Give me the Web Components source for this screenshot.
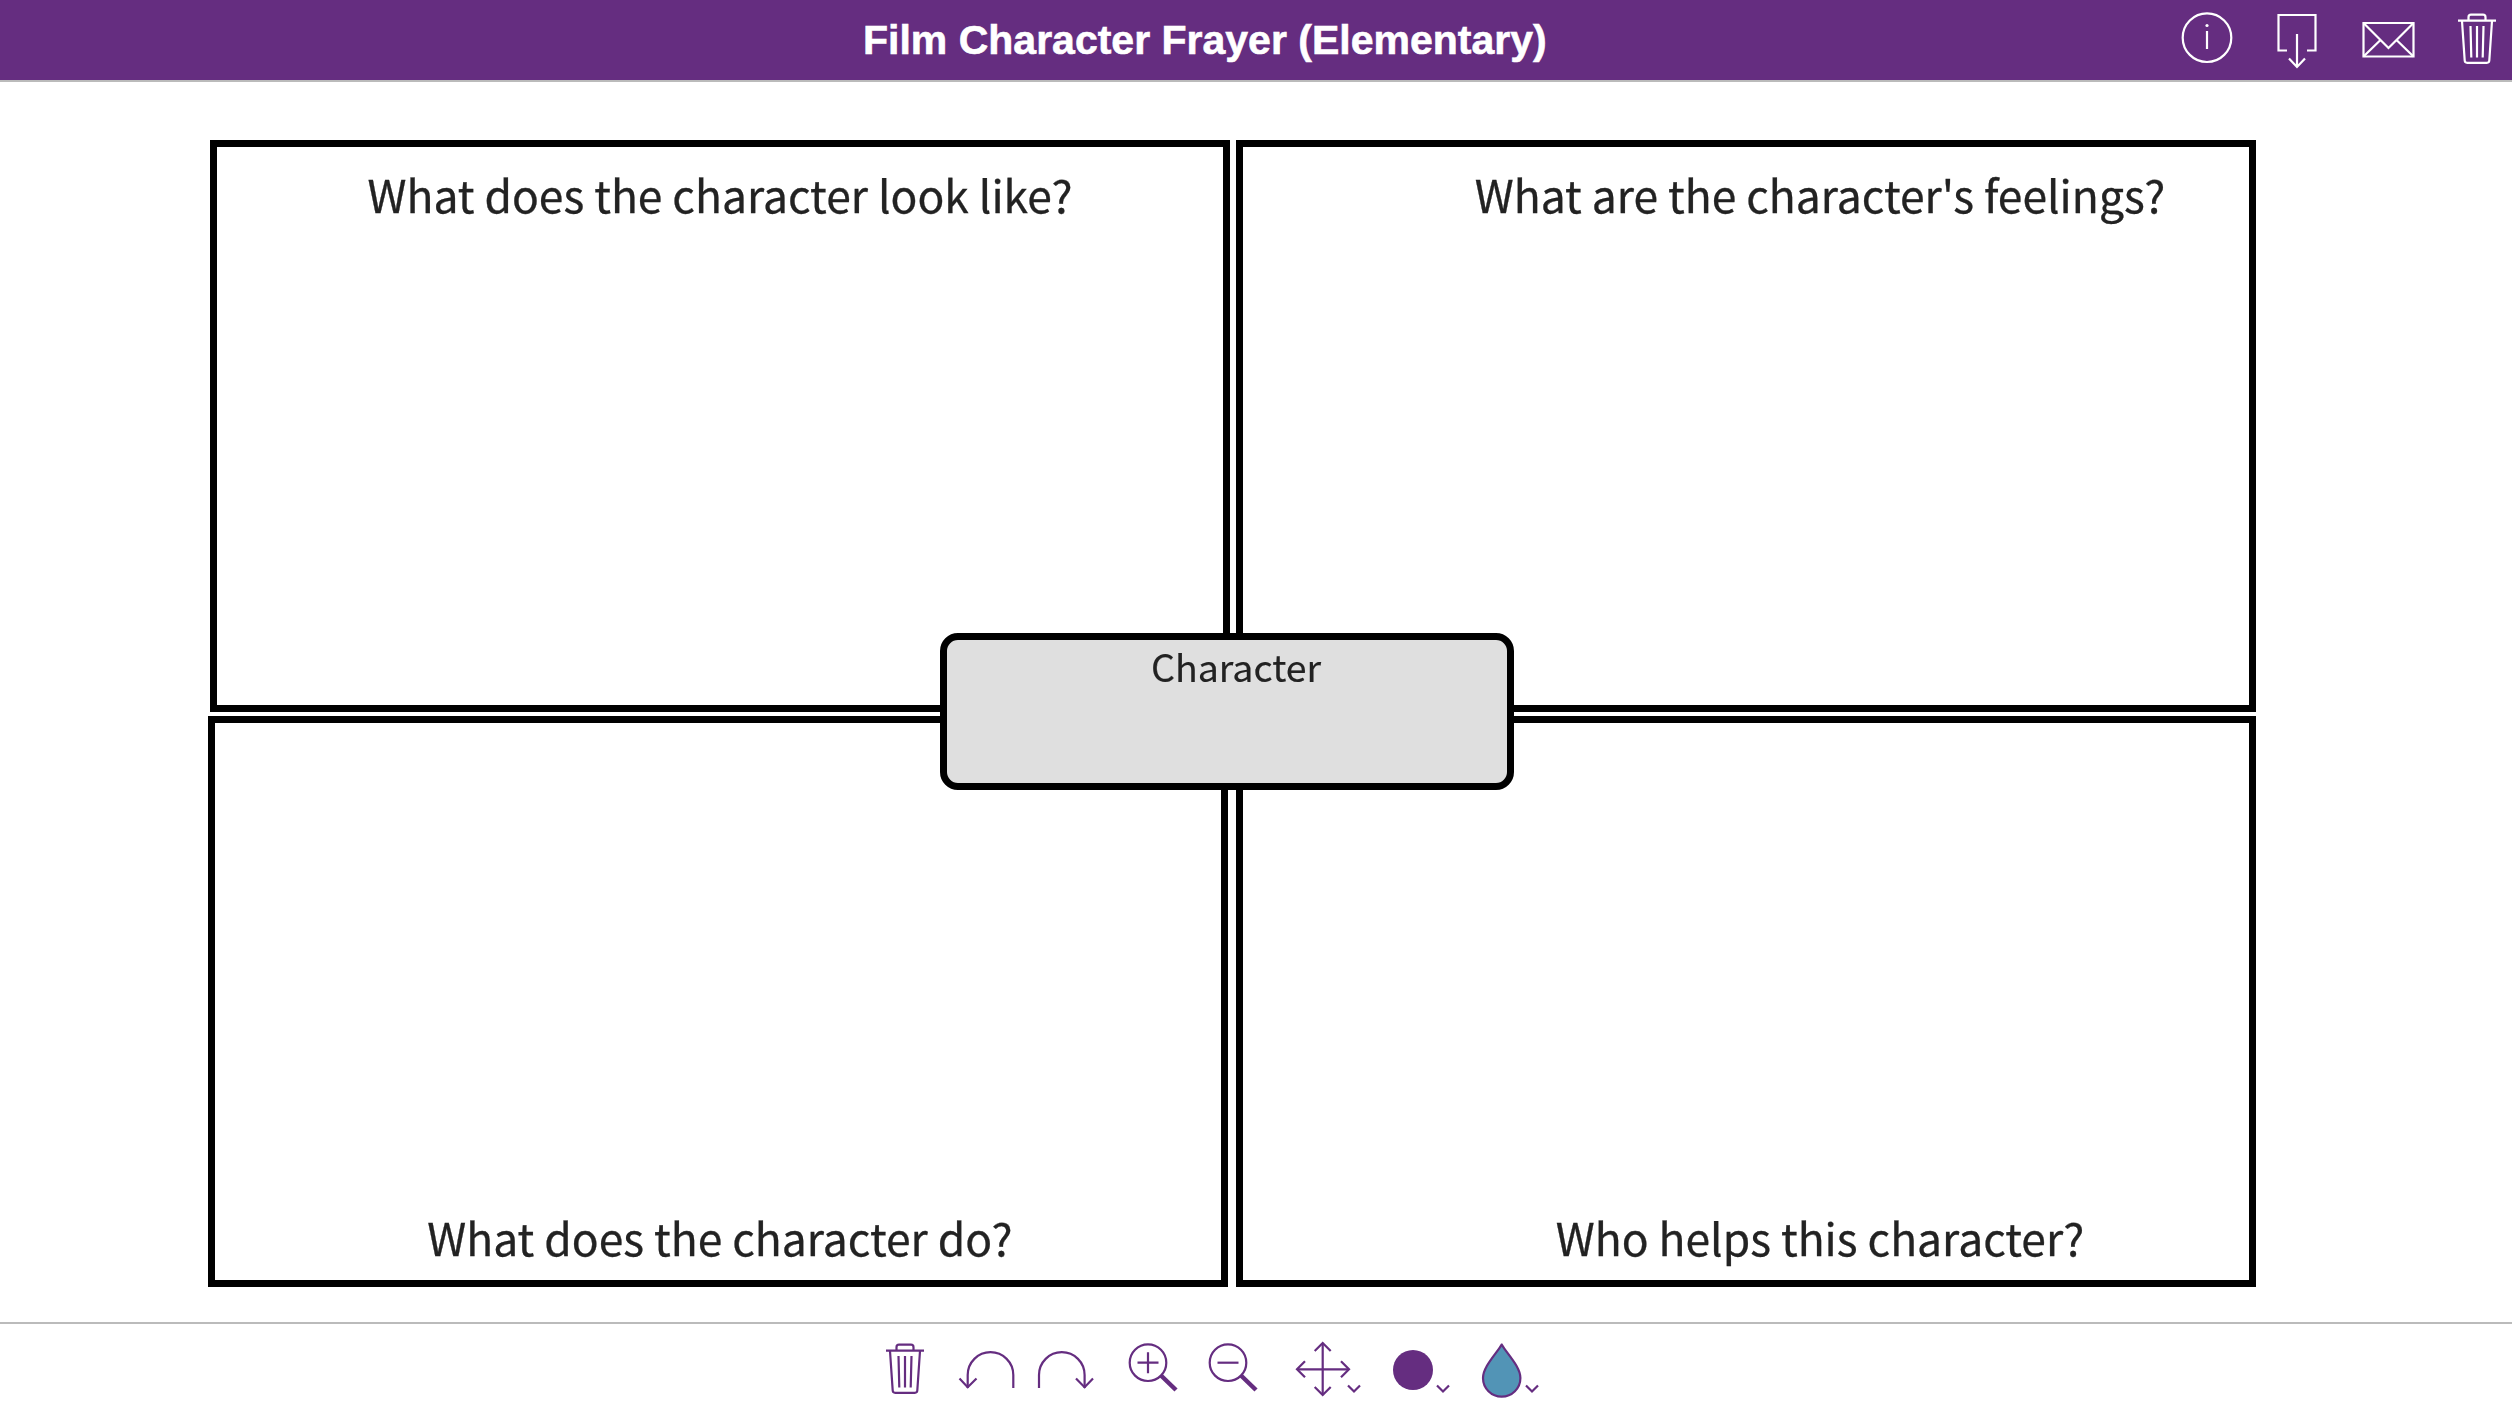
<!DOCTYPE html>
<html lang="en">
<head>
<meta charset="utf-8">
<title>Film Character Frayer (Elementary)</title>
<style>
	html, body { margin: 0; background: #fff; }
	body { width: 2512px; height: 1410px; overflow: hidden; font-family: "Noto Sans CJK SC", sans-serif; }
</style>
</head>
<body>
<film-topbar>Film Character Frayer (Elementary)</film-topbar>
<frayer-board>
	<frayer-cell slot="tl">What does the character look like?</frayer-cell>
	<frayer-cell slot="tr" shift>What are the character's feelings?</frayer-cell>
	<frayer-cell slot="bl" bottom nudge>What does the character do?</frayer-cell>
	<frayer-cell slot="br" bottom shift>Who helps this character?</frayer-cell>
	<frayer-center slot="center">Character</frayer-center>
</frayer-board>
<film-toolbar></film-toolbar>

<script>
// viewBox values are in page coordinates, makes it easy to compare with the screenshot
const ICONS = {
	info: ['2177 0 60 80', `
		<circle cx="2207" cy="37.7" r="24.3"/>
		<path d="M2207 31v18"/>
		<circle cx="2207" cy="25.5" r="1.6" fill="currentColor" stroke="none"/>`],
	download: ['2267 0 60 80', `
		<path d="M2287 50.500h-8.500v-35.500h37v35.500h-8.500"/>
		<path d="M2297 34v33M2289 58.500l8 8.500l8-8.500"/>`],
	mail: ['2357 0 60 80', `
		<path d="M2363.500 23h50v33.500h-50z"/>
		<path d="M2363.500 23l25 25l25-25M2363.500 56.500l17-16.500M2413.500 56.500l-17-16.500"/>`],
	trashTop: ['2447 0 60 80', `
		<path d="M2458 20.700h38"/>
		<path d="M2468.500 20.700v-3.500a2.500 2.500 0 0 1 2.500-2.500h12a2.500 2.500 0 0 1 2.500 2.500v3.500"/>
		<path d="M2462 21l2.700 39.500a2.500 2.500 0 0 0 2.500 2.300h19.600a2.500 2.500 0 0 0 2.500-2.300l2.700-39.500"/>
		<path d="M2470.500 26l.8 31.500M2477 26v31.500M2483.500 26l-.8 31.500"/>`],
	trash: ['880 1324 70 86', `
		<path d="M886 1350.700h38"/>
		<path d="M896.500 1350.700v-3.500a2.500 2.500 0 0 1 2.500-2.500h12a2.500 2.500 0 0 1 2.500 2.500v3.500"/>
		<path d="M890 1351l2.700 39.500a2.500 2.500 0 0 0 2.500 2.300h19.600a2.500 2.500 0 0 0 2.500-2.300l2.700-39.500"/>
		<path d="M898.500 1356l.8 31.500M905 1356v31.500M911.500 1356l-.8 31.500"/>`],
	undo: ['950 1324 80 86', `
		<path d="M1013.300 1388v-13a22.800 22.800 0 0 0-45.600 0v13"/>
		<path d="M959.500 1378.500l8.200 8.700l8.800-8.700"/>`],
	redo: ['1030 1324 80 86', `
		<path d="M1039 1388v-13a22.800 22.800 0 0 1 45.600 0v13"/>
		<path d="M1076 1378.500l8.600 8.700l8.400-8.700"/>`],
	zoomIn: ['1110 1324 90 86', `
		<circle cx="1148" cy="1362.700" r="18.300"/>
		<path d="M1137.500 1362.700h21M1148 1352.200v21"/>
		<path d="M1161 1375.500l15 14.500" stroke-width="4.500"/>`],
	zoomOut: ['1200 1324 80 86', `
		<circle cx="1228" cy="1362.700" r="18.300"/>
		<path d="M1217.500 1362.700h21"/>
		<path d="M1241 1375.500l15 14.500" stroke-width="4.500"/>`],
	move: ['1280 1324 110 86', `
		<path d="M1297 1369.300h52M1322.700 1343v52"/>
		<path d="M1314.700 1351l8-8l8 8M1314.700 1387l8 8l8-8M1305 1361.300l-8 8l8 8M1341 1361.300l8 8l-8 8"/>
		<path d="M1348 1385.500l6 6l6-6"/>`],
	color: ['1390 1324 90 86', `
		<circle cx="1413" cy="1370" r="20" fill="currentColor" stroke="none"/>
		<path d="M1437 1385.500l6 6l6-6"/>`],
	drop: ['1480 1324 70 86', `
		<path d="M1501.700 1344.500c-5 9-18.700 22-18.700 33.500a18.700 18.700 0 0 0 37.400 0c0-11.500-13.700-24.500-18.700-33.500z" fill="#5294b6"/>
		<path d="M1526 1385.500l6 6l6-6"/>`]
};

class AppIcon extends HTMLElement {
	connectedCallback() {
		const [box, body] = ICONS[this.getAttribute('name')];
		const [, , w, h] = box.split(' ');
		this.attachShadow({ mode: 'open' });
		this.shadowRoot.innerHTML = `
			<style>
				:host { display: block; flex: none; width: ${w}px; height: ${h}px; }
				svg { display: block; fill: none; stroke: currentColor; stroke-width: 2.2; }
			</style>
			<svg width="${w}" height="${h}" viewBox="${box}">${body}</svg>
		`;
	}
}

class FilmTopbar extends HTMLElement {
	constructor() {
		super();
		this.attachShadow({ mode: 'open' });
		this.shadowRoot.innerHTML = `
			<style>
				:host {
					display: flex;
					align-items: center;
					box-sizing: border-box;
					height: 82px;
					padding: 0 5px 0 863px;
					background: #652d80;
					border-bottom: 2px solid #bbb;
					color: #fff;
				}
				.title {
					font: bold 41px "Liberation Sans", Arial, sans-serif;
					-webkit-text-stroke: 0.6px #fff;
					white-space: nowrap;
				}
				.icons {
					display: flex;
					gap: 30px;
					margin-left: auto;
				}
			</style>
			<div class="title"><slot></slot></div>
			<div class="icons">
				<app-icon name="info"></app-icon>
				<app-icon name="download"></app-icon>
				<app-icon name="mail"></app-icon>
				<app-icon name="trashTop"></app-icon>
			</div>
		`;
	}
}

class FrayerCell extends HTMLElement {
	constructor() {
		super();
		this.attachShadow({ mode: 'open' });
		this.shadowRoot.innerHTML = `
			<style>
				:host {
					display: flex;
					flex-direction: column;
					box-sizing: border-box;
					width: 1020px;
					border: 7px solid #000;
					padding: 14px 0 0;
					background: #fff;
					color: #222;
					font: 44.4px/66px "Noto Sans CJK SC", "Noto Sans", sans-serif;
					-webkit-text-stroke: 0.3px #222;
					text-align: center;
				}
				:host([bottom]) { justify-content: flex-end; padding: 0 0 10px; }
				:host([shift]) { padding-left: 148px; }
				:host([nudge]) { padding-left: 4px; }
			</style>
			<slot></slot>
		`;
	}
}

class FrayerCenter extends HTMLElement {
	constructor() {
		super();
		this.attachShadow({ mode: 'open' });
		this.shadowRoot.innerHTML = `
			<style>
				:host {
					position: absolute;
					left: 940px;
					top: 493px;
					box-sizing: border-box;
					width: 574px;
					height: 157px;
					padding: 0 0 0 18px;
					border: 7px solid #000;
					border-radius: 18px;
					background: #dfdfdf;
					color: #222;
					font: 37.500px/52px "Noto Sans CJK SC", "Noto Sans", sans-serif;
					-webkit-text-stroke: 0.2px #222;
					text-align: center;
				}
			</style>
			<slot></slot>
		`;
	}
}

class FrayerBoard extends HTMLElement {
	constructor() {
		super();
		this.attachShadow({ mode: 'open' });
		this.shadowRoot.innerHTML = `
			<style>
				:host {
					display: flex;
					flex-direction: column;
					gap: 4px;
					position: relative;
					margin: 58px 0 35px;
					filter: blur(0.6px);
				}
				.row { display: flex; }
				.top { height: 572px; gap: 6px; margin-left: 210px; }
				.bottom { height: 571px; gap: 8px; margin-left: 208px; }
			</style>
			<div class="row top"><slot name="tl"></slot><slot name="tr"></slot></div>
			<div class="row bottom"><slot name="bl"></slot><slot name="br"></slot></div>
			<slot name="center"></slot>
		`;
	}
}

class FilmToolbar extends HTMLElement {
	constructor() {
		super();
		this.attachShadow({ mode: 'open' });
		this.shadowRoot.innerHTML = `
			<style>
				:host {
					display: flex;
					box-sizing: border-box;
					height: 88px;
					padding-left: 880px;
					border-top: 2px solid #bbb;
					color: #652d80;
				}
			</style>
			${['trash', 'undo', 'redo', 'zoomIn', 'zoomOut', 'move', 'color', 'drop']
				.map((n) => `<app-icon name="${n}"></app-icon>`).join('')}
		`;
	}
}

customElements.define('app-icon', AppIcon);
customElements.define('film-topbar', FilmTopbar);
customElements.define('frayer-cell', FrayerCell);
customElements.define('frayer-center', FrayerCenter);
customElements.define('frayer-board', FrayerBoard);
customElements.define('film-toolbar', FilmToolbar);
</script>
</body>
</html>
